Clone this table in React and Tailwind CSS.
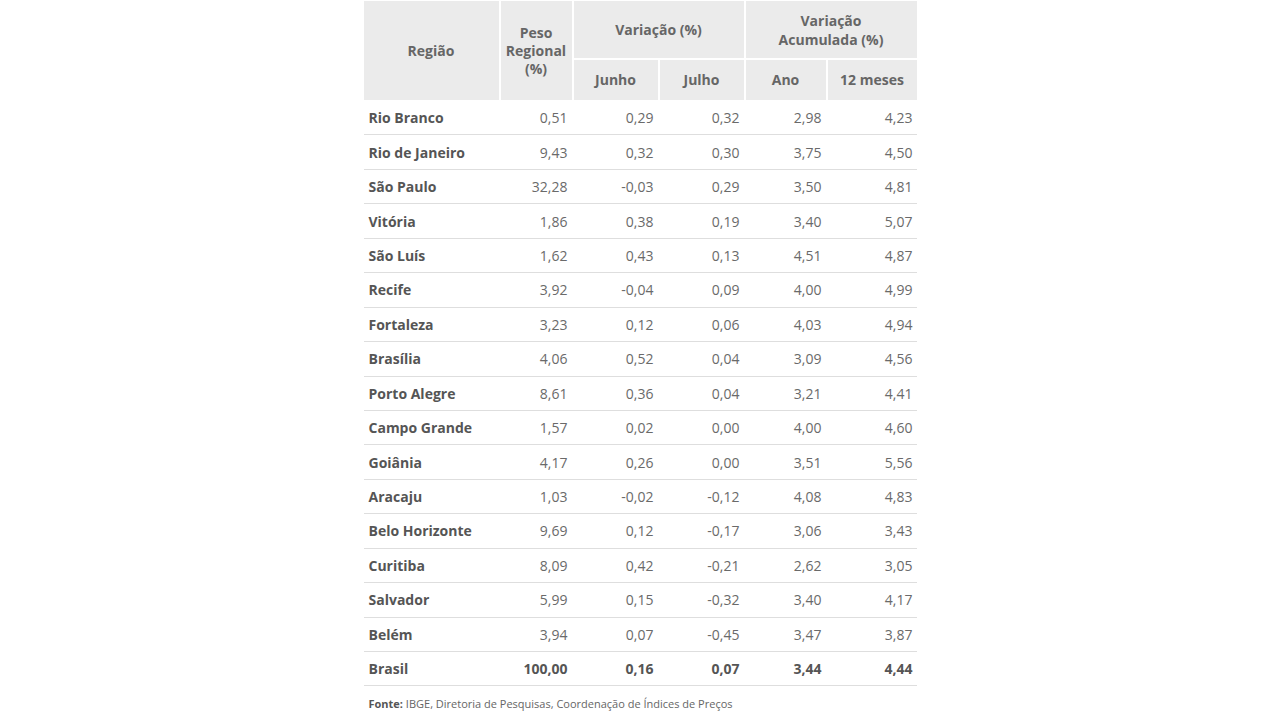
import React from "react";

const rows = [
  ["Rio Branco", "0,51", "0,29", "0,32", "2,98", "4,23"],
  ["Rio de Janeiro", "9,43", "0,32", "0,30", "3,75", "4,50"],
  ["São Paulo", "32,28", "-0,03", "0,29", "3,50", "4,81"],
  ["Vitória", "1,86", "0,38", "0,19", "3,40", "5,07"],
  ["São Luís", "1,62", "0,43", "0,13", "4,51", "4,87"],
  ["Recife", "3,92", "-0,04", "0,09", "4,00", "4,99"],
  ["Fortaleza", "3,23", "0,12", "0,06", "4,03", "4,94"],
  ["Brasília", "4,06", "0,52", "0,04", "3,09", "4,56"],
  ["Porto Alegre", "8,61", "0,36", "0,04", "3,21", "4,41"],
  ["Campo Grande", "1,57", "0,02", "0,00", "4,00", "4,60"],
  ["Goiânia", "4,17", "0,26", "0,00", "3,51", "5,56"],
  ["Aracaju", "1,03", "-0,02", "-0,12", "4,08", "4,83"],
  ["Belo Horizonte", "9,69", "0,12", "-0,17", "3,06", "3,43"],
  ["Curitiba", "8,09", "0,42", "-0,21", "2,62", "3,05"],
  ["Salvador", "5,99", "0,15", "-0,32", "3,40", "4,17"],
  ["Belém", "3,94", "0,07", "-0,45", "3,47", "3,87"],
];

const total = ["Brasil", "100,00", "0,16", "0,07", "3,44", "4,44"];

const cols = "grid grid-cols-[135px_71px_84px_84px_80px_89px] gap-x-[2px]";

function Row({ r, bold }) {
  return (
    <div className={`${cols} h-[34.44px] border-b border-[#dedede] items-center`}>
      <div className="px-[5px] font-bold text-[#555555]">{r[0]}</div>
      {r.slice(1).map((v, i) => (
        <div
          key={i}
          className={`px-[4px] text-right ${bold ? "font-bold text-[#555555]" : "text-[#6a6a6a]"}`}
        >
          {v}
        </div>
      ))}
    </div>
  );
}

export default function App() {
  return (
    <div
      className="w-[1280px] h-[720px] bg-white flex justify-center"
      style={{ fontFamily: '"Open Sans", "Liberation Sans", sans-serif' }}
    >
      <div className="w-[553px] pt-[1px] text-[14px]">
        <div className="grid grid-cols-[135px_71px_84px_84px_80px_89px] grid-rows-[57px_40px] gap-[2px] font-bold text-[#666666] text-center leading-[18px]">
          <div className="row-span-2 bg-[#ebebeb] flex items-center justify-center">Região</div>
          <div className="row-span-2 bg-[#ebebeb] flex items-center justify-center">
            Peso
            <br />
            Regional
            <br />
            (%)
          </div>
          <div className="col-span-2 bg-[#ebebeb] flex items-center justify-center">Variação (%)</div>
          <div className="col-span-2 bg-[#ebebeb] flex items-center justify-center leading-[19px]">
            Variação
            <br />
            Acumulada (%)
          </div>
          <div className="bg-[#ebebeb] flex items-center justify-center">Junho</div>
          <div className="bg-[#ebebeb] flex items-center justify-center">Julho</div>
          <div className="bg-[#ebebeb] flex items-center justify-center">Ano</div>
          <div className="bg-[#ebebeb] flex items-center justify-center">12 meses</div>
        </div>
        <div className="mt-[1px]">
          {rows.map((r) => (
            <Row key={r[0]} r={r} />
          ))}
          <Row r={total} bold />
        </div>
        <div className="mt-[10px] px-[5px] text-[11px] text-[#666666]">
          <span className="font-bold text-[#555555]">Fonte:</span> IBGE, Diretoria de Pesquisas, Coordenação de Índices de Preços
        </div>
      </div>
    </div>
  );
}
